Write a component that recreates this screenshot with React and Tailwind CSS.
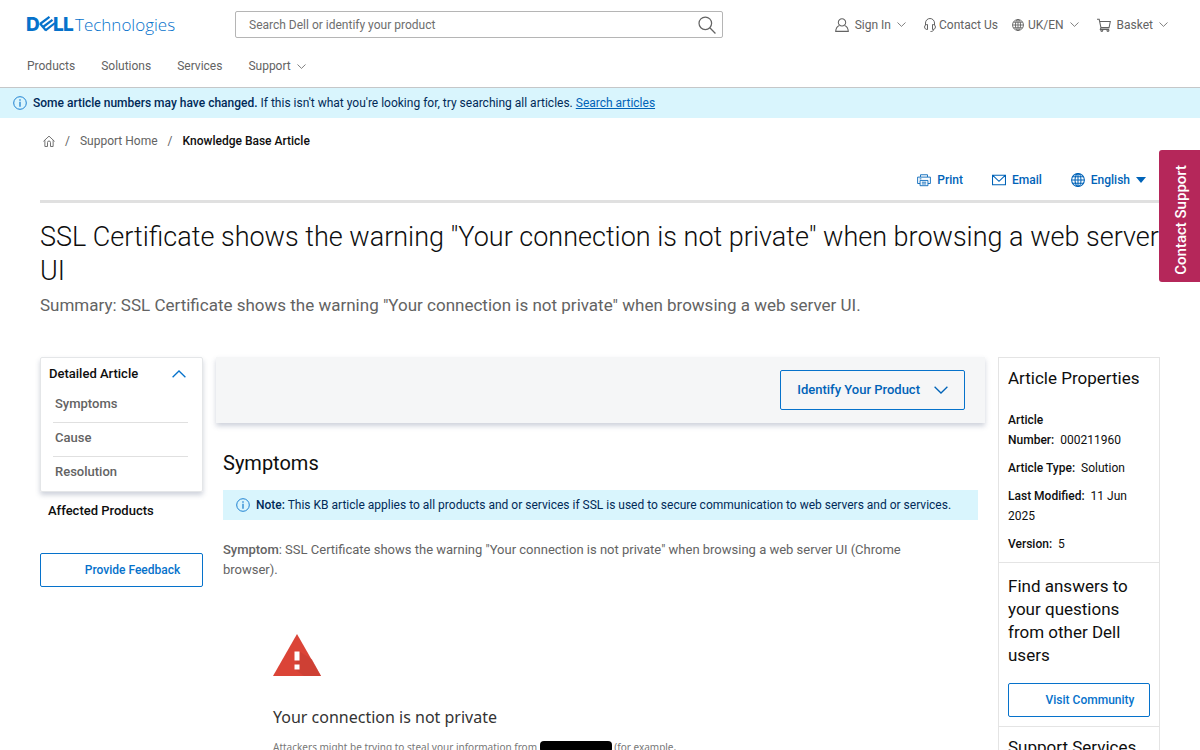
import { useState } from "react";

const navLinks = ["Products", "Solutions", "Services"];

const properties = [
  { label: "Article Number:", value: "000211960" },
  { label: "Article Type:", value: "Solution" },
  { label: "Last Modified:", value: "11 Jun 2025" },
  { label: "Version:", value: "5" },
];

function Icon({ className, box = 16, width = 1, children }) {
  return (
    <svg viewBox={`0 0 ${box} ${box}`} className={`shrink-0 ${className}`} fill="none" stroke="currentColor" strokeWidth={width} aria-hidden="true">
      {children}
    </svg>
  );
}

function Chevron({ className, up }) {
  return (
    <svg viewBox="0 0 14 8" className={`shrink-0 ${className}`} fill="none" stroke="currentColor" strokeWidth="1.3" aria-hidden="true">
      <path d={up ? "M.6 7.2 7 1l6.4 6.2" : "M.6.8 7 7 13.4.8"} />
    </svg>
  );
}

function Globe({ className }) {
  return (
    <Icon className={className} width={1.2}>
      <circle cx="8" cy="8" r="7.3" />
      <ellipse cx="8" cy="8" rx="3.4" ry="7.3" />
      <path d="M8 .7v14.6M.7 8h14.6M1.8 4.3h12.4M1.8 11.7h12.4" />
    </Icon>
  );
}

function Info({ className }) {
  return (
    <Icon className={className}>
      <circle cx="8" cy="8" r="7.2" />
      <path d="M8 6.6v5.6M8 3.8v1.5" strokeWidth="1.3" />
    </Icon>
  );
}

function Logo() {
  return (
    <svg viewBox="0 0 160 28" className="h-7 w-40" fill="#0672cb" role="img" aria-label="Dell Technologies">
      <g fontFamily="Inter" fontWeight="800" fontSize="19">
        <text x="3" y="20">D</text>
        <text x="30" y="20">L</text>
        <text x="40" y="20">L</text>
      </g>
      <g fill="none" stroke="#0672cb" strokeWidth="2.2">
        <path d="m17 13 9.500-7.200M20 16l9.500-7.200M22.500 19.300l9.500-7.300" />
        <path d="m17 12.500 6 7" />
      </g>
      <text x="52" y="20" fontFamily="Open Sans" fontWeight="300" fontSize="17">Technologies</text>
    </svg>
  );
}

function Header() {
  return (
    <header className="border-b border-[#c5c7c8] px-[27px] text-[12px] text-[#636363]">
      <div className="flex h-[49px] items-center">
        <a href="#home" className="-ml-1 w-[212px]">
          <Logo />
        </a>
        <form className="flex h-[27px] w-[488px] items-center rounded-[2px] border border-[#b5b5b5] pr-1.5 pl-[13px]">
          <input type="search" aria-label="Search Dell or identify your product" placeholder="Search Dell or identify your product" className="min-w-0 flex-1 outline-none placeholder:text-[#6e6e6e]" />
          <button type="button" aria-label="Search">
            <Icon className="h-[18px] w-[18px]" width={1.1}>
              <circle cx="6.500" cy="6.500" r="5.600" />
              <path d="m10.500 10.500 5 5" />
            </Icon>
          </button>
        </form>
        <div className="ml-auto flex items-center pr-[5px]">
          <button type="button" className="flex items-center gap-1.5">
            <Icon className="h-3.5 w-3.5" width={1.2}>
              <circle cx="8" cy="5" r="4.200" />
              <path d="M5 8.500C2.500 9.500 1 11.500.8 15.300h14.400C15 11.500 13.500 9.500 11 8.500" />
            </Icon>
            Sign In
            <Chevron className="h-[5px] w-[9px]" />
          </button>
          <a href="#contact" className="ml-[18px] flex items-center gap-[3px]">
            <svg viewBox="0 0 12 14" className="h-3.5 w-3 shrink-0" fill="none" stroke="currentColor" aria-hidden="true">
              <path d="M1.500 7V5a4.500 4.500 0 0 1 9 0v2M3.500 6.500v5C1.500 11.500.6 10.500.6 9s.9-2.500 2.900-2.500ZM8.500 6.500v5c2 0 2.900-1 2.900-2.500s-.9-2.500-2.900-2.500ZM9.500 11.500c0 1.500-1 2-3 2" />
            </svg>
            Contact Us
          </a>
          <button type="button" className="ml-3.5 flex items-center gap-1">
            <Globe className="h-3 w-3" />
            UK/EN
            <Chevron className="ml-0.5 h-[5px] w-[9px]" />
          </button>
          <button type="button" className="ml-[18px] flex items-center gap-1.5">
            <Icon className="h-3.5 w-3.5" width={1.2}>
              <path d="M0 1.500h2.500L4.500 11h9.300l1.400-7H3.100M4.500 11l-.7 2h10" />
              <circle cx="5.500" cy="14.200" r="1.100" />
              <circle cx="12.500" cy="14.200" r="1.100" />
            </Icon>
            Basket
            <Chevron className="h-[5px] w-[9px]" />
          </button>
        </div>
      </div>
      <nav className="flex h-[38px] items-start gap-[26px] pt-2">
        {navLinks.map((link) => (
          <a key={link} href={`#${link}`}>
            {link}
          </a>
        ))}
        <button type="button" className="flex items-center gap-1.5">
          Support
          <Chevron className="h-[5px] w-[9px]" />
        </button>
      </nav>
    </header>
  );
}

function ArticleNav() {
  const [open, setOpen] = useState(true);

  return (
    <aside>
      <div className="rounded-[2px] border border-[#e4e6e8] px-2 pb-px shadow-[0_3px_5px_rgba(60,75,110,0.25)]">
        <button type="button" onClick={() => setOpen(!open)} className="flex h-[31px] w-full items-center justify-between pr-2 text-[13px] font-medium text-[#0e0e0e]">
          Detailed Article
          <Chevron up={open} className="h-2 w-3.5 text-[#0672cb]" />
        </button>
        {open && (
          <ul className="mr-1.5 ml-1 divide-y divide-[#e0e0e0] text-[13px] font-medium text-[#636363]">
            {["Symptoms", "Cause", "Resolution"].map((item) => (
              <li key={item} className="pt-1 pb-2">
                <a href={`#${item}`} className="block px-[2px] leading-[21px]">
                  {item}
                </a>
              </li>
            ))}
          </ul>
        )}
      </div>
      <a href="#affected" className="mt-[9px] block px-2 text-[13px] leading-5 font-medium text-[#0e0e0e]">
        Affected Products
      </a>
      <button type="button" className="mt-8 h-[34px] w-full rounded-[2px] border border-[#0672cb] pl-[22px] text-[12px] font-medium text-[#0672cb]">
        Provide Feedback
      </button>
    </aside>
  );
}

function Article() {
  return (
    <main className="min-w-0">
      <div className="flex h-[66px] items-center justify-end bg-[#f5f6f7] pr-5 shadow-[0_3px_5px_rgba(60,75,110,0.25)]">
        <button type="button" className="flex h-10 items-center gap-3.5 rounded-[2px] border border-[#0672cb] px-4 text-[13px] font-medium text-[#0063b8]">
          Identify Your Product
          <Chevron className="h-2 w-3.5" />
        </button>
      </div>
      <div className="px-[7px]">
        <h2 className="mt-[26px] text-[20px] leading-7 text-[#0e0e0e]">Symptoms</h2>
        <p className="mt-[13px] flex h-[30px] items-center bg-[#d9f5fd] px-[13px] text-[12px] text-[#002a58]">
          <Info className="mr-1.5 h-3.5 w-3.5 text-[#0672cb]" />
          <span>
            <strong className="font-medium">Note:</strong> This KB article applies to all products and or services if SSL is used to secure communication to web servers and or services.
          </span>
        </p>
        <p className="mt-5 pr-10 text-[13px] leading-5 text-[#636363]">
          <strong className="font-medium">Symptom</strong>: SSL Certificate shows the warning "Your connection is not private" when browsing a web server UI (Chrome browser).
        </p>
        <section className="mt-[54px] pl-[50px] font-['Noto_Sans',sans-serif] text-[#333]">
          <svg viewBox="0 0 48 42" className="h-[42px] w-12" aria-hidden="true">
            <path d="M24 0 48 42H0Z" fill="#db4437" />
            <path d="m26.500 17.500 12.500 8L48 42H31l-9.500-7Z" fill="#c93f33" opacity=".7" />
            <path d="M21.500 17.500h5v9h-5ZM21.500 30.500h5v5h-5Z" fill="#fff" />
          </svg>
          <h3 className="mt-[29px] text-[16px] leading-6">Your connection is not private</h3>
          <p className="mt-2 text-[10px] leading-5 text-[#777]">
            Attackers might be trying to steal your information from <span className="mt-1 inline-block h-3 w-[72px] rounded-[4px] bg-black align-top" /> (for example,
          </p>
        </section>
      </div>
    </main>
  );
}

function Properties() {
  return (
    <aside className="text-[#0e0e0e]">
      <section className="border border-[#e4e4e4] px-[9px] py-2">
        <h2 className="text-[17px] leading-6">Article Properties</h2>
        <dl className="mt-5 space-y-2 pr-4 text-[12px] leading-5">
          {properties.map(({ label, value }) => (
            <div key={label}>
              <dt className="mr-1.5 inline font-medium">{label}</dt>
              <dd className="inline">{value}</dd>
            </div>
          ))}
        </dl>
      </section>
      <section className="border-x border-b border-[#e4e4e4] px-[9px] pt-3 pb-[9px]">
        <h2 className="text-[17px] leading-[23px]">Find answers to your questions from other Dell users</h2>
        <button type="button" className="mt-4 h-[34px] w-full rounded-[2px] border border-[#0672cb] pl-[22px] text-[12px] font-medium text-[#0672cb]">
          Visit Community
        </button>
      </section>
      <section className="border-x border-[#e4e4e4] px-[9px] pt-2">
        <h2 className="text-[17px] leading-6">Support Services</h2>
      </section>
    </aside>
  );
}

export default function App() {
  return (
    <div className="min-h-screen bg-white font-[Roboto,sans-serif]">
      <Header />
      <p className="flex h-[30px] items-center bg-[#d9f5fd] px-[13px] text-[12px] text-[#002a58]">
        <Info className="mr-1.5 h-3.5 w-3.5 text-[#0672cb]" />
        <span>
          <strong className="font-medium">Some article numbers may have changed.</strong> If this isn't what you're looking for, try searching all articles.{" "}
          <a href="#search" className="text-[#0063b8] underline">
            Search articles
          </a>
        </span>
      </p>
      <div className="px-10">
        <nav aria-label="Breadcrumb" className="mt-[13px] flex items-center gap-2.5 pl-[3px] text-[12px] leading-5 text-[#636363]">
          <a href="#support" aria-label="Home">
            <Icon className="h-3 w-3" width={1.2}>
              <path d="m.6 8.500 7.400-7 7.400 7M2.500 7v8.300H6V10a2 2 0 0 1 4 0v5.300h3.500V7" />
            </Icon>
          </a>
          <span>/</span>
          <a href="#support-home">Support Home</a>
          <span>/</span>
          <span className="font-medium text-[#0e0e0e]">Knowledge Base Article</span>
        </nav>
        <div className="mt-5 flex h-[32px] items-start justify-end gap-[29px] border-b-3 border-[#e0e0e0] pr-3.5 text-[12px] leading-[18px] font-medium text-[#0063b8]">
          <button type="button" className="flex items-center gap-1.5">
            <Icon className="h-3.5 w-3.5">
              <path d="M4 4.500V2h8v2.500M3.500 12H.7V4.700h14.600V12h-2.800M3.500 8.500h9v6h-9ZM5.500 10.500h5M5.500 12.500h5M3 6.700h2" />
            </Icon>
            Print
          </button>
          <button type="button" className="flex items-center gap-1.5">
            <Icon className="h-3.5 w-3.5" width={1.2}>
              <path d="M.6 2.500h14.800v11H.6ZM.6 2.500 8 9.500l7.400-7" />
            </Icon>
            Email
          </button>
          <button type="button" className="flex items-center gap-1.5">
            <Globe className="h-3.5 w-3.5" />
            English
            <svg viewBox="0 0 10 6" className="h-1.5 w-2.5" fill="currentColor" aria-hidden="true">
              <path d="M0 0h10L5 6Z" />
            </svg>
          </button>
        </div>
        <h1 className="mt-[17px] text-[27px] leading-[34px] font-light text-[#0e0e0e]">SSL Certificate shows the warning "Your connection is not private" when browsing a web server UI</h1>
        <p className="mt-[5px] text-[17px] leading-6 text-[#636363]">Summary: SSL Certificate shows the warning "Your connection is not private" when browsing a web server UI.</p>
        <div className="mt-10 grid grid-cols-[163px_1fr_162px] items-start gap-x-[13px]">
          <ArticleNav />
          <Article />
          <Properties />
        </div>
      </div>
      <button type="button" className="fixed top-[150px] right-0 flex h-[132px] w-[41px] items-center justify-center rounded-l-[3px] bg-[#b5275a] pt-2 pl-1 text-[15px] font-medium text-white">
        <span className="rotate-180 [writing-mode:vertical-rl]">Contact Support</span>
      </button>
    </div>
  );
}
